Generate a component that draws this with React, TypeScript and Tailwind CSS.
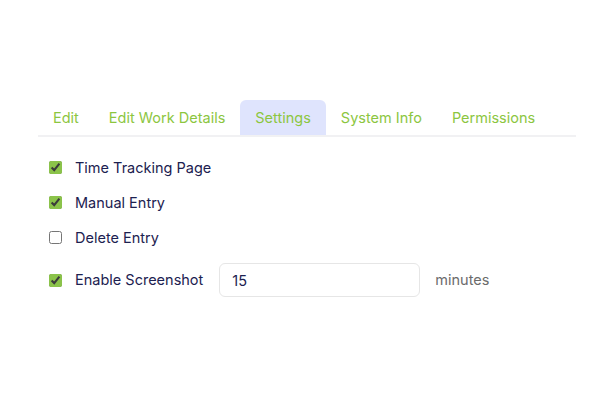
import React from "react";

const tabs = ["Edit", "Edit Work Details", "Settings", "System Info", "Permissions"];

const options = [
  { label: "Time Tracking Page", checked: true },
  { label: "Manual Entry", checked: true },
  { label: "Delete Entry", checked: false },
];

export default function App() {
  return (
    <div className="min-h-[400px] bg-white px-[38px] pt-[100px] font-['Inter',sans-serif]">
      {/* Tabs */}
      <div className="flex border-b-2 border-[#f1f1f3] w-[538px]">
        {tabs.map((t) => (
          <button
            key={t}
            className={`h-[35px] px-[15px] text-[14.5px] text-[#8cc63f] rounded-t-[6px] ${
              t === "Settings" ? "bg-[#dfe4fd]" : ""
            }`}
          >
            {t}
          </button>
        ))}
      </div>

      {/* Options */}
      <div className="pt-[13px] pl-[11px] text-[14.5px] text-[#1c2150]">
        {options.map((o) => (
          <label key={o.label} className="flex items-center h-[35px] gap-[13px]">
            <input
              type="checkbox"
              defaultChecked={o.checked}
              className="m-0 w-[13px] h-[13px] accent-[#8bc34a]"
            />
            <span>{o.label}</span>
          </label>
        ))}
        <div className="flex items-center mt-[8px] h-[34px]">
          <label className="flex items-center gap-[13px]">
            <input
              type="checkbox"
              defaultChecked
              className="m-0 w-[13px] h-[13px] accent-[#8bc34a]"
            />
            <span>Enable Screenshot</span>
          </label>
          <input
            defaultValue="15"
            className="ml-[16px] w-[201px] h-[34px] rounded-[6px] border border-[#e6e6e6] px-[12px] text-[14.5px] text-[#1c2150] outline-none"
          />
          <span className="ml-[15px] text-[#6b6b6b]">minutes</span>
        </div>
      </div>
    </div>
  );
}
